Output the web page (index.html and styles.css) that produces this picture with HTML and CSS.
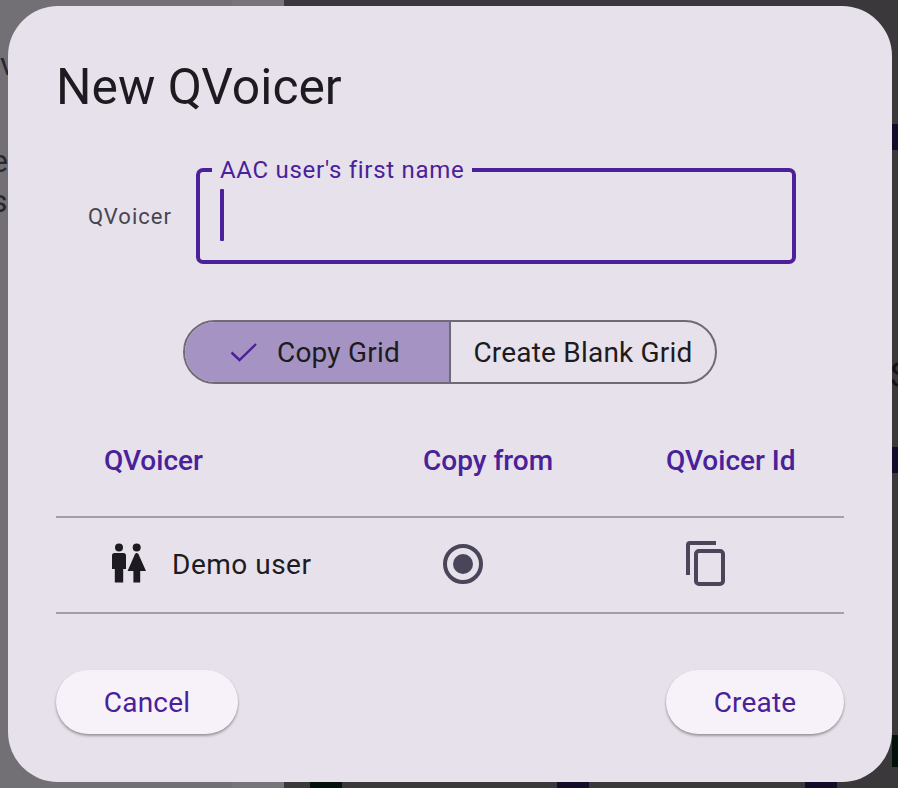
FILE: index.html
```html
<!DOCTYPE html>
<html lang="en">
<head>
<meta charset="utf-8">
<title>New QVoicer</title>
<link rel="stylesheet" href="styles.css">
</head>
<body>
<div class="backdrop">
  <div class="bg-left"></div>
  <div class="bg-mid"></div>
  <div class="bg-right"></div>
  <span class="peek peek-w">v</span>
  <span class="peek peek-e">e</span>
  <span class="peek peek-s">s</span>
  <span class="peek peek-S">S</span>
  <i class="chip chip-r1"></i>
  <i class="chip chip-r2"></i>
  <i class="chip chip-r3"></i>
  <i class="chip chip-b1"></i>
  <i class="chip chip-b2"></i>
  <i class="chip chip-b3"></i>
</div>
<main class="dialog">
  <h1 class="title">New QVoicer</h1>
  <div class="name-row">
    <span class="name-label">QVoicer</span>
    <div class="field">
      <span class="field-label">AAC user's first name</span>
      <span class="caret"></span>
    </div>
  </div>
  <div class="segments">
    <div class="segment segment-on">
      <svg class="check" viewBox="0 0 30 24" width="30" height="24"><path d="M2.5 12.5 L10.500 20 L27 4" fill="none" stroke="#4a2199" stroke-width="2.400"/></svg>
      <span>Copy Grid</span>
    </div>
    <div class="segment segment-off"><span>Create Blank Grid</span></div>
  </div>
  <div class="table">
    <div class="row head">
      <div class="col-a">QVoicer</div>
      <div class="col-b">Copy from</div>
      <div class="col-c">QVoicer Id</div>
    </div>
    <div class="row body">
      <div class="col-a user">
        <svg class="people" viewBox="0 0 36 42" width="36" height="42">
          <circle cx="9" cy="4.500" r="4"/>
          <circle cx="26.700" cy="4.500" r="4"/>
          <path d="M4.500 10 H13.500 Q16 10 16 12.500 V26 H13.200 V39.500 H4.800 V26 H2 V12.500 Q2 10 4.500 10 Z"/>
          <path d="M25 11 Q26.700 8.800 28.400 11 L36 28 H30.200 V39.500 H23.400 V28 H17.600 Z"/>
        </svg>
        <span>Demo user</span>
      </div>
      <div class="col-b">
        <svg class="radio" viewBox="0 0 42 42" width="42" height="42"><circle cx="21" cy="21" r="18" fill="none" stroke="#4a4558" stroke-width="4"/><circle cx="21" cy="21" r="10" fill="#4a4558"/></svg>
      </div>
      <div class="col-c">
        <svg class="copy" viewBox="0 0 42 46" width="42" height="46"><path d="M30 2 H4 Q2 2 2 4 V34" fill="none" stroke="#4a4558" stroke-width="4"/><rect x="10" y="10" width="27" height="33" rx="3" fill="none" stroke="#4a4558" stroke-width="4"/></svg>
      </div>
    </div>
  </div>
  <div class="actions">
    <button class="btn btn-cancel" type="button">Cancel</button>
    <button class="btn btn-create" type="button">Create</button>
  </div>
</main>
</body>
</html>
```
FILE: styles.css
```css
* { box-sizing: border-box; }
html, body { margin: 0; height: 788px; overflow: hidden; }
body { position: relative; width: 898px; font-family: Roboto, "Liberation Sans", sans-serif; background: #3a383b; }

.backdrop { position: absolute; inset: 0; overflow: hidden; }
.bg-left { position: absolute; left: 0; top: 0; bottom: 0; width: 232px; background: #726f75; }
.bg-mid { position: absolute; left: 232px; top: 0; bottom: 0; width: 52px; background: #77747a; }
.bg-right { position: absolute; left: 284px; top: 0; bottom: 0; right: 0; background: #3a383b; }
.peek { position: absolute; font-size: 32px; color: #29272c; line-height: 30px; }
.peek-w { left: 0; top: 49px; }
.peek-e { left: -9px; top: 146px; }
.peek-s { left: -9px; top: 186px; }
.peek-S { left: 890px; top: 361px; font-size: 35px; color: #141216; }
.chip { position: absolute; display: block; background: #130b29; }
.chip-r1 { left: 892px; top: 124px; width: 6px; height: 26px; }
.chip-r2 { left: 892px; top: 447px; width: 6px; height: 26px; }
.chip-r3 { left: 892px; top: 735px; width: 6px; height: 32px; background: #04100a; }
.chip-b1 { left: 310px; top: 782px; width: 32px; height: 6px; background: #04100a; }
.chip-b2 { left: 557px; top: 782px; width: 32px; height: 6px; background: #130b29; }
.chip-b3 { left: 805px; top: 782px; width: 32px; height: 6px; background: #130b29; }

.dialog {
  position: absolute; left: 8px; top: 6px; width: 884px; height: 776px;
  background: #e6e1eb; border-radius: 50px;
  padding: 49px 48px 48px; display: flex; flex-direction: column;
}
.title { margin: 0; font-size: 49.800px; line-height: 64px; font-weight: 400; color: #1d1b20; letter-spacing: 0; }

.name-row { display: flex; align-items: center; margin-top: 49px; padding-left: 32px; }
.name-label { width: 108px; font-size: 22px; color: #49454f; letter-spacing: 1px; flex: none; }
.field { position: relative; width: 600px; height: 96px; border: 4px solid #4a2199; border-radius: 7px; }
.field-label { position: absolute; left: 12px; top: -15px; padding: 0 8px; background: #e6e1eb; color: #4a2199; font-size: 24px; line-height: 26px; letter-spacing: .7px; }
.caret { position: absolute; left: 20px; top: 17px; width: 4px; height: 52px; background: #4a2199; border-radius: 1px; }

.segments { display: flex; align-self: center; margin-top: 56px; height: 64px; border: 2px solid #6f6a75; border-radius: 32px; overflow: hidden; }
.segment { display: flex; align-items: center; font-size: 28px; color: #1d1b20; letter-spacing: .2px; }
.segment-on { width: 266px; background: #a594c3; gap: 18px; padding-left: 44px; border-right: 2px solid #6f6a75; }
.segment-off { width: 264px; justify-content: center; }

.table { margin-top: 20px; display: flex; flex-direction: column; }
.row { display: flex; align-items: center; }
.head { height: 112px; font-size: 28px; font-weight: 500; color: #4a2199; letter-spacing: 0; }
.body { height: 98px; padding-bottom: 2px; border-top: 2px solid #a29da8; border-bottom: 2px solid #a29da8; }
.col-a { width: 367px; padding-left: 48px; }
.col-b { width: 243px; }
.col-c { flex: 1; }
.user { display: flex; align-items: center; gap: 26px; padding-left: 54px; font-size: 28px; color: #1d1b20; letter-spacing: .5px; }
.people { fill: #1d1b20; flex: none; }
.body .col-b { padding-left: 19px; display: flex; }
.body .col-c { display: flex; padding-left: 20px; }

.actions { display: flex; justify-content: space-between; margin-top: 56px; }
.btn { height: 64px; border: 0; border-radius: 32px; background: #f7f2fa; color: #4a2199; font: 400 28px Roboto, sans-serif; letter-spacing: .2px; box-shadow: 0 2px 3px rgba(0,0,0,.28), 0 1px 2px rgba(0,0,0,.12); padding: 0; }
.btn-cancel { width: 182px; }
.btn-create { width: 178px; }
```
